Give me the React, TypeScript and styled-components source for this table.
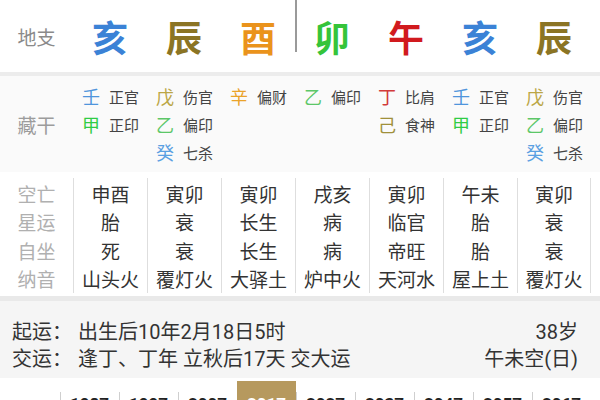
import React from "react";
import styled, { createGlobalStyle } from "styled-components";

const Global = createGlobalStyle`
  html, body { margin: 0; padding: 0; background: #fff; }
  body { font-family: Roboto, "Noto Sans CJK SC", sans-serif; }
`;

const COLS = "73px repeat(7, 74px)";

const Page = styled.div`
  width: 600px;
  height: 400px;
  overflow: hidden;
  background: #fff;
`;

const BranchRow = styled.div`
  display: grid;
  grid-template-columns: ${COLS};
  height: 72px;
  align-items: center;
`;

const Label = styled.div<{ $tone?: string }>`
  text-align: center;
  font-size: 19px;
  color: ${(p) => p.$tone || "#999"};
`;

const BigChar = styled.div<{ $color: string; $divider?: boolean }>`
  position: relative;
  height: 72px;
  display: flex;
  align-items: center;
  justify-content: center;
  font-size: 36px;
  font-weight: 700;
  color: ${(p) => p.$color};
  &::before {
    content: "";
    display: ${(p) => (p.$divider ? "block" : "none")};
    position: absolute;
    left: 0;
    top: 0;
    width: 2px;
    height: 52px;
    background: #9a9a9a;
  }
`;

const Band = styled.div<{ $h: number; $c: string }>`
  height: ${(p) => p.$h}px;
  background: ${(p) => p.$c};
`;

const HiddenSection = styled.div`
  display: grid;
  grid-template-columns: ${COLS};
  padding: 6px 0 6px;
  background: #fafafa;
`;

const HiddenLabel = styled(Label)`
  align-self: center;
`;

const HiddenCol = styled.div`
  display: flex;
  flex-direction: column;
  padding-left: 9px;
`;

const Entry = styled.div`
  height: 28px;
  display: flex;
  align-items: center;
  white-space: nowrap;
`;

const Stem = styled.span<{ $color: string }>`
  font-size: 18px;
  color: ${(p) => p.$color};
  width: 18px;
`;

const God = styled.span`
  font-size: 15px;
  color: #444;
  margin-left: 9px;
`;

const InfoGrid = styled.div`
  display: grid;
  grid-template-columns: ${COLS};
  padding: 6px 0 3px;
  background: #fff;
`;

const LabelCol = styled.div`
  display: flex;
  flex-direction: column;
  padding-top: 1px;
`;

const ValueCol = styled.div<{ $last?: boolean }>`
  display: flex;
  flex-direction: column;
  padding-top: 1px;
  border-left: 1px solid #dedede;
  border-right: ${(p) => (p.$last ? "1px solid #dedede" : "none")};
`;

const Cell = styled.div<{ $label?: boolean }>`
  height: 28.5px;
  display: flex;
  align-items: center;
  justify-content: center;
  font-size: 19px;
  color: ${(p) => (p.$label ? "#b0b0b0" : "#333")};
  white-space: nowrap;
`;

const LuckSection = styled.div`
  background: #f5f5f5;
  padding: 15px 22px 8px 12px;
`;

const LuckRow = styled.div`
  display: grid;
  grid-template-columns: 66px 1fr auto;
  height: 27px;
  align-items: center;
  font-size: 20px;
  color: #333;
  white-space: nowrap;
`;

const YearRow = styled.div`
  display: grid;
  grid-template-columns: 60px repeat(9, 59px);
  height: 22px;
  background: #fff;
`;

const Year = styled.div<{ $active?: boolean }>`
  position: relative;
  margin-top: ${(p) => (p.$active ? "3px" : "0")};
  padding-top: ${(p) => (p.$active ? "13px" : "16px")};
  background: ${(p) => (p.$active ? "#b6995e" : "transparent")};
  color: ${(p) => (p.$active ? "#fff" : "#222")};
  font-size: 17px;
  font-weight: 700;
  text-align: center;
  line-height: 20px;
  &::before {
    content: "";
    display: ${(p) => (p.$active ? "none" : "block")};
    position: absolute;
    left: 0;
    top: 14px;
    bottom: 0;
    width: 1px;
    background: #cfcfcf;
  }
`;

const branches = [
  { c: "亥", color: "#3b82d6" },
  { c: "辰", color: "#8b7424" },
  { c: "酉", color: "#ea931c" },
  { c: "卯", color: "#35c43a", divider: true },
  { c: "午", color: "#d11a1e" },
  { c: "亥", color: "#3b82d6" },
  { c: "辰", color: "#8b7424" },
];

const STEM_COLORS: Record<string, string> = {
  壬: "#4f95dc",
  甲: "#2fcc45",
  戊: "#bba646",
  乙: "#5cc768",
  癸: "#5aa0e2",
  辛: "#eaa32a",
  丁: "#d23a3a",
  己: "#a0903a",
};

type E = [string, string];
const hidden: E[][] = [
  [["壬", "正官"], ["甲", "正印"]],
  [["戊", "伤官"], ["乙", "偏印"], ["癸", "七杀"]],
  [["辛", "偏财"]],
  [["乙", "偏印"]],
  [["丁", "比肩"], ["己", "食神"]],
  [["壬", "正官"], ["甲", "正印"]],
  [["戊", "伤官"], ["乙", "偏印"], ["癸", "七杀"]],
];

const infoLabels = ["空亡", "星运", "自坐", "纳音"];
const infoCols = [
  ["申酉", "胎", "死", "山头火"],
  ["寅卯", "衰", "衰", "覆灯火"],
  ["寅卯", "长生", "长生", "大驿土"],
  ["戌亥", "病", "病", "炉中火"],
  ["寅卯", "临官", "帝旺", "天河水"],
  ["午未", "胎", "胎", "屋上土"],
  ["寅卯", "衰", "衰", "覆灯火"],
];

const years = ["1987", "1997", "2007", "2017", "2027", "2037", "2047", "2057", "2067"];

export default function App() {
  return (
    <Page>
      <Global />
      <BranchRow>
        <Label $tone="#8a8a8a">地支</Label>
        {branches.map((b, i) => (
          <BigChar key={i} $color={b.color} $divider={b.divider}>
            {b.c}
          </BigChar>
        ))}
      </BranchRow>
      <Band $h={4} $c="#ececec" />
      <HiddenSection>
        <HiddenLabel $tone="#9c9c9c">藏干</HiddenLabel>
        {hidden.map((col, i) => (
          <HiddenCol key={i}>
            {col.map((e, j) => (
              <Entry key={j}>
                <Stem $color={STEM_COLORS[e[0]]}>{e[0]}</Stem>
                <God>{e[1]}</God>
              </Entry>
            ))}
          </HiddenCol>
        ))}
      </HiddenSection>
      <InfoGrid>
        <LabelCol>
          {infoLabels.map((l) => (
            <Cell key={l} $label>
              {l}
            </Cell>
          ))}
        </LabelCol>
        {infoCols.map((col, i) => (
          <ValueCol key={i} $last={i === infoCols.length - 1}>
            {col.map((v, j) => (
              <Cell key={j}>{v}</Cell>
            ))}
          </ValueCol>
        ))}
      </InfoGrid>
      <Band $h={5} $c="#e9e9e9" />
      <LuckSection>
        <LuckRow>
          <span>起运：</span>
          <span>出生后10年2月18日5时</span>
          <span>38岁</span>
        </LuckRow>
        <LuckRow>
          <span>交运：</span>
          <span>逢丁、丁年 立秋后17天 交大运</span>
          <span>午未空(日)</span>
        </LuckRow>
      </LuckSection>
      <YearRow>
        <div />
        {years.map((y, i) => (
          <Year key={y} $active={i === 3}>
            {y}
          </Year>
        ))}
      </YearRow>
    </Page>
  );
}
